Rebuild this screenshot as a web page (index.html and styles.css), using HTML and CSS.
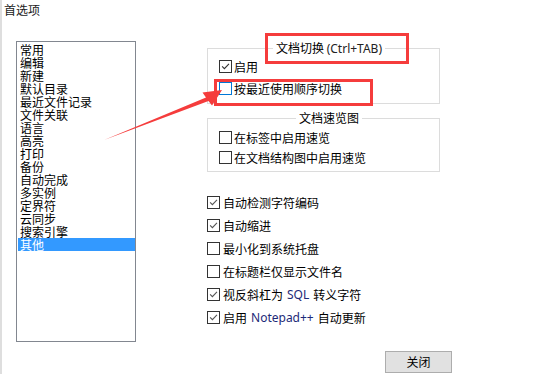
FILE: index.html
```html
<!DOCTYPE html>
<html lang="zh-CN">
<head>
<meta charset="utf-8">
<title>首选项</title>
<link rel="stylesheet" href="styles.css">
</head>
<body>
<div class="window">
  <div class="title">首选项</div>
  <div class="main">
    <ul class="listbox">
      <li>常用</li>
      <li>编辑</li>
      <li>新建</li>
      <li>默认目录</li>
      <li>最近文件记录</li>
      <li>文件关联</li>
      <li>语言</li>
      <li>高亮</li>
      <li>打印</li>
      <li>备份</li>
      <li>自动完成</li>
      <li>多实例</li>
      <li>定界符</li>
      <li>云同步</li>
      <li>搜索引擎</li>
      <li class="selected">其他</li>
    </ul>
    <div class="settings">
      <fieldset class="group group-switch">
        <legend>文档切换 <span class="latin">(Ctrl+TAB)</span></legend>
        <label class="check-row row-22"><span class="box checked"><svg viewBox="0 0 13 13"><path d="M2.5 6.3 L5.2 9 L10.6 3.4"/></svg></span>启用</label>
        <label class="check-row row-22"><span class="box focus"></span>按最近使用顺序切换</label>
      </fieldset>
      <fieldset class="group group-preview">
        <legend>文档速览图</legend>
        <label class="check-row row-20"><span class="box"></span>在标签中启用速览</label>
        <label class="check-row row-20"><span class="box"></span>在文档结构图中启用速览</label>
      </fieldset>
      <div class="options">
        <label class="check-row row-23 plain"><span class="box checked light"><svg viewBox="0 0 13 13"><path d="M2.5 6.3 L5.2 9 L10.6 3.4"/></svg></span>自动检测字符编码</label>
        <label class="check-row row-23 plain"><span class="box checked light"><svg viewBox="0 0 13 13"><path d="M2.5 6.3 L5.2 9 L10.6 3.4"/></svg></span>自动缩进</label>
        <label class="check-row row-23 plain"><span class="box"></span>最小化到系统托盘</label>
        <label class="check-row row-23 plain"><span class="box"></span>在标题栏仅显示文件名</label>
        <label class="check-row row-23 plain"><span class="box checked light"><svg viewBox="0 0 13 13"><path d="M2.5 6.3 L5.2 9 L10.6 3.4"/></svg></span>视反斜杠为<span class="latin blue">SQL</span>转义字符</label>
        <label class="check-row row-23 plain"><span class="box checked light"><svg viewBox="0 0 13 13"><path d="M2.5 6.3 L5.2 9 L10.6 3.4"/></svg></span>启用<span class="latin blue">Notepad++</span>自动更新</label>
      </div>
    </div>
  </div>
  <div class="footer"><button class="close-btn">关闭</button></div>
</div>
<div class="mark mark-title"></div>
<div class="mark mark-option"></div>
<svg class="arrow" width="538" height="374" viewBox="0 0 538 374">
  <polygon points="104,140 206,97.5 202.5,92.5 222,90 212,105.5 208.5,101"/>
</svg>
</body>
</html>
```
FILE: styles.css
```css
html, body {
  margin: 0;
  padding: 0;
  background: #ffffff;
}
body {
  width: 538px;
  height: 374px;
  overflow: hidden;
  font-family: "Noto Sans CJK SC", "Noto Sans", sans-serif;
  font-size: 12px;
  color: #000;
}
.window {
  box-sizing: border-box;
  width: 538px;
  height: 374px;
  border-left: 2px solid #dedede;
}
.title {
  padding: 2px 0 0 2px;
  line-height: 16px;
  height: 16px;
  font-size: 12px;
  color: #1a1a1a;
}
.main {
  display: flex;
  align-items: flex-start;
}
.listbox {
  list-style: none;
  box-sizing: border-box;
  margin: 23px 0 0 14px;
  padding: 1px 0 0 1px;
  width: 120px;
  height: 301px;
  border: 1px solid #828790;
  background: #fff;
}
.listbox li {
  height: 13px;
  line-height: 13px;
  padding-left: 2px;
  white-space: nowrap;
}
.listbox li.selected {
  background: #3399ff;
  color: #fff;
}
.settings {
  margin: 23px 0 0 71px;
  width: 233px;
}
.group {
  margin: 0;
  min-inline-size: 0;
  border: 1px solid #dcdcdc;
  padding: 0 0 4px 11px;
}
.group legend {
  margin: 0 auto;
  padding: 0 3px;
  line-height: 14px;
  height: 14px;
}
.group-preview {
  margin-top: 7px;
  padding-top: 2px;
}
.check-row {
  display: flex;
  align-items: center;
  white-space: nowrap;
}
.row-22 { height: 22px; }
.row-20 { height: 20px; }
.row-23 { height: 23px; }
.box {
  box-sizing: border-box;
  width: 13px;
  height: 13px;
  border: 1px solid #333;
  margin-right: 2px;
  flex: none;
  display: flex;
  background: #fff;
}
.plain .box {
  margin-right: 3px;
}
.box svg {
  width: 11px;
  height: 11px;
  margin: 0;
}
.box svg path {
  fill: none;
  stroke: #333;
  stroke-width: 1.3;
}
.box.light svg path {
  stroke: #555;
}
.box.focus {
  border-color: #0078d7;
}
.latin {
  font-family: "Noto Sans", "Liberation Sans", sans-serif;
  font-size: 12px;
  color: #222;
}
.latin.blue {
  color: #1d2a78;
  margin: 0 4px;
}
.options {
  margin-top: 19px;
}
.footer {
  padding: 9px 0 0 383px;
}
.close-btn {
  box-sizing: border-box;
  width: 67px;
  height: 22px;
  background: #e1e1e1;
  border: 1px solid #adadad;
  font-family: "Noto Sans CJK SC", sans-serif;
  font-size: 12px;
  line-height: 18px;
  padding: 0;
  color: #000;
}
.mark {
  position: absolute;
  box-sizing: border-box;
  border: 3px solid #f53c3c;
}
.mark-title {
  left: 265px;
  top: 33px;
  width: 144px;
  height: 31px;
}
.mark-option {
  left: 214px;
  top: 79px;
  width: 159px;
  height: 27px;
}
.arrow {
  position: absolute;
  left: 0;
  top: 0;
  pointer-events: none;
}
.arrow polygon {
  fill: #f53c3c;
}
```
